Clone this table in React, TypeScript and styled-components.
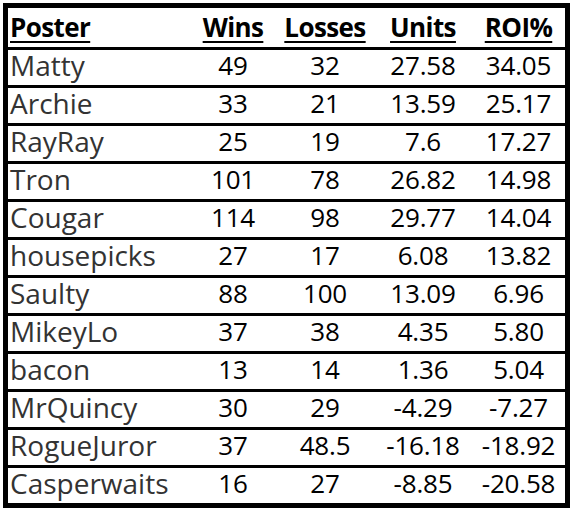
import React from "react";
import styled, { createGlobalStyle } from "styled-components";

const Global = createGlobalStyle`
  html, body { margin: 0; padding: 0; background: #ffffff; }
  body { font-family: "Open Sans", "Noto Sans", sans-serif; }
`;

const Sheet = styled.div`
  margin: 3px 0 0 3px;
  width: 557px;
  border: 5px solid #000;
  background: #fff;
`;

const Row = styled.div<{ $head?: boolean }>`
  display: grid;
  grid-template-columns: 182px 86px 98px 98px 93px;
  height: ${(p) => (p.$head ? "39px" : "35px")};
  border-top: ${(p) => (p.$head ? "none" : "3px solid #000")};
  align-items: center;
`;

const Cell = styled.div<{ $name?: boolean; $head?: boolean }>`
  font-size: ${(p) => (p.$name && !p.$head ? "28px" : "26px")};
  line-height: 31px;
  padding-bottom: ${(p) => (p.$head ? "1px" : "4px")};
  font-weight: ${(p) => (p.$head ? 700 : 400)};
  color: ${(p) => (p.$head ? "#000" : p.$name ? "#333333" : "#000")};
  text-align: ${(p) => (p.$name ? "left" : "center")};
  padding-left: ${(p) => (p.$name ? "2px" : "0")};
  white-space: nowrap;
  letter-spacing: ${(p) => (p.$head ? "-0.6px" : p.$name ? "0px" : "-0.2px")};
  span {
    text-decoration: ${(p) => (p.$head ? "underline" : "none")};
    text-decoration-thickness: 2px;
    text-underline-offset: 4px;
  }
`;

const rows: [string, string, string, string, string][] = [
  ["Matty", "49", "32", "27.58", "34.05"],
  ["Archie", "33", "21", "13.59", "25.17"],
  ["RayRay", "25", "19", "7.6", "17.27"],
  ["Tron", "101", "78", "26.82", "14.98"],
  ["Cougar", "114", "98", "29.77", "14.04"],
  ["housepicks", "27", "17", "6.08", "13.82"],
  ["Saulty", "88", "100", "13.09", "6.96"],
  ["MikeyLo", "37", "38", "4.35", "5.80"],
  ["bacon", "13", "14", "1.36", "5.04"],
  ["MrQuincy", "30", "29", "-4.29", "-7.27"],
  ["RogueJuror", "37", "48.5", "-16.18", "-18.92"],
  ["Casperwaits", "16", "27", "-8.85", "-20.58"],
];

const headers = ["Poster", "Wins", "Losses", "Units", "ROI%"];

export default function App() {
  return (
    <>
      <Global />
      <Sheet>
        <Row $head>
          {headers.map((h, i) => (
            <Cell key={h} $head $name={i === 0}>
              <span>{h}</span>
            </Cell>
          ))}
        </Row>
        {rows.map((r) => (
          <Row key={r[0]}>
            {r.map((v, i) => (
              <Cell key={i} $name={i === 0}>
                {v}
              </Cell>
            ))}
          </Row>
        ))}
      </Sheet>
    </>
  );
}
